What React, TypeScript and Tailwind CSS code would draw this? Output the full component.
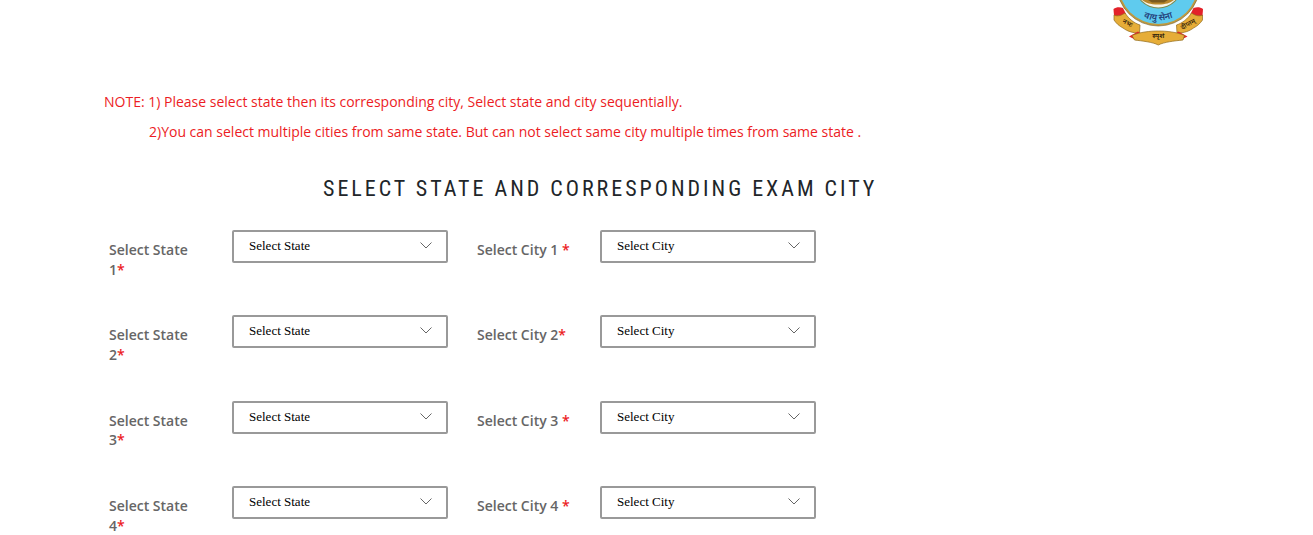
const states = [
  { id: 1, city: "Select City 1 " },
  { id: 2, city: "Select City 2" },
  { id: 3, city: "Select City 3 " },
  { id: 4, city: "Select City 4 " },
];

function Emblem() {
  return (
    <svg width="92" height="47" viewBox="0 0 92 47" className="block">
      <defs>
        <path id="ringText" d="M 23.2 12.1 A 36 36 0 0 0 69.4 12.1" />
      </defs>
      {/* ring */}
      <circle cx="46.3" cy="-15.5" r="41.5" fill="#c19a3e" stroke="#6d5a2a" strokeWidth="0.6" />
      <circle cx="46.3" cy="-15.5" r="39.5" fill="#5fcbee" />
      <circle cx="46.3" cy="-15.5" r="24" fill="#7d8a4c" />
      <circle cx="46.3" cy="-15.5" r="23" fill="#f7f4e6" />
      <path d="M30 0 L62 0 C58 3 54 4.5 46 4.5 C38 4.5 34 3 30 0 Z" fill="#b8862b" />
      <path d="M36 0 L56 0 L52 2.5 L40 2.5 Z" fill="#7a5a1e" />
      <text fontSize="9" fill="#23407a" fontFamily="'Noto Sans', sans-serif" fontWeight="600">
        <textPath href="#ringText" startOffset="50%" textAnchor="middle">वायु सेना</textPath>
      </text>
      {/* ribbon side pieces */}
      <path d="M1.5 9 C4 7 8 7 11 8 L14 14 L8 17 L2 16 Z" fill="#e3222a" />
      <path d="M91 9 C88.5 7 84.5 7 81.5 8 L78.5 14 L84.5 17 L90.5 16 Z" fill="#e3222a" />
      <path d="M2 15 C6 17 10 15 13 13 C17 19 22 23 28 25 L27.5 33 C20 33 15 31 11 28 C7 26 4 23 2 20 Z" fill="#e6ad38" stroke="#8f6a1c" strokeWidth="0.7" />
      <path d="M90.5 15 C86.5 17 82.5 15 79.5 13 C75.5 19 70.5 23 64.5 25 L65 33 C72.5 33 77.5 31 81.5 28 C85.5 26 88.5 23 90.5 20 Z" fill="#e6ad38" stroke="#8f6a1c" strokeWidth="0.7" />
      <path d="M17 36.5 L26 31.5 L28 33 L26 37 L22 39 Z" fill="#e3222a" />
      <path d="M75.5 36.5 L66.5 31.5 L64.5 33 L66.5 37 L70.5 39 Z" fill="#e3222a" />
      {/* ribbon centre */}
      <path d="M20 35.5 C28 32 38 31 46.3 31 C54.6 31 64.6 32 72.5 35.5 L71 40 C62 41 52 42 46.3 45 C40.6 42 30 41 22.5 40 Z" fill="#e6ad38" stroke="#8f6a1c" strokeWidth="0.7" />
      <text x="46.3" y="38" textAnchor="middle" fontSize="7" fill="#33240c" fontFamily="'Noto Sans', sans-serif" fontWeight="600">स्पृशं</text>
      <text x="0" y="0" transform="translate(14.5 25) rotate(28)" textAnchor="middle" fontSize="6.5" fill="#33240c" fontFamily="'Noto Sans', sans-serif" fontWeight="600">नभः</text>
      <text x="0" y="0" transform="translate(77 26) rotate(-28)" textAnchor="middle" fontSize="6.5" fill="#33240c" fontFamily="'Noto Sans', sans-serif" fontWeight="600">दीप्तम्</text>
    </svg>
  );
}

function FakeSelect({ label }: { label: string }) {
  return (
    <div className="flex h-[33px] w-[216px] items-center justify-between rounded-[2px] border-2 border-[#999] bg-white pl-[15px] pr-[15px]">
      <span className="relative top-[-1px] font-['Liberation_Serif',serif] text-[13px] text-black">{label}</span>
      <svg width="12" height="7" viewBox="0 0 12 7" fill="none" stroke="#666" strokeWidth="1" className="relative top-[-1px] left-[0.5px]">
        <path d="M0.5 0.5 L6 6 L11.5 0.5" />
      </svg>
    </div>
  );
}

export default function App() {
  return (
    <div className="h-[535px] overflow-hidden bg-white font-['Open_Sans',sans-serif]">
      <div className="flex justify-end pr-[109px]">
        <Emblem />
      </div>

      <div className="mt-[45px] pl-[104px] text-[14px] leading-[20px] text-[#ec1c24]">
        <p>NOTE: 1) Please select state then its corresponding city, Select state and city sequentially.</p>
        <p className="mt-[10px] pl-[45px]">
          2)You can select multiple cities from same state. But can not select same city multiple times from same state .
        </p>
      </div>

      <h2 className="ml-[323px] mt-[33px] font-['Roboto',sans-serif] text-[22px] leading-[28px] tracking-[2.98px] text-[#212529] [font-stretch:75%]">
        SELECT STATE AND CORRESPONDING EXAM CITY
      </h2>

      <div className="mt-[27px] pl-[109px]">
        {states.map((row) => (
          <div key={row.id} className="flex h-[85.4px] items-start">
            <label className="w-[123px] pr-[30px] pt-[10px] text-[14px] font-semibold leading-[19.5px] text-[#666]">
              Select State {row.id}
              <span className="text-[#ec1c24]">*</span>
            </label>
            <FakeSelect label="Select State" />
            <label className="ml-[29px] w-[123px] whitespace-pre pt-[10px] text-[14px] font-semibold leading-[19.5px] text-[#666]">
              {row.city}
              <span className="text-[#ec1c24]">*</span>
            </label>
            <FakeSelect label="Select City" />
          </div>
        ))}
      </div>
    </div>
  );
}
